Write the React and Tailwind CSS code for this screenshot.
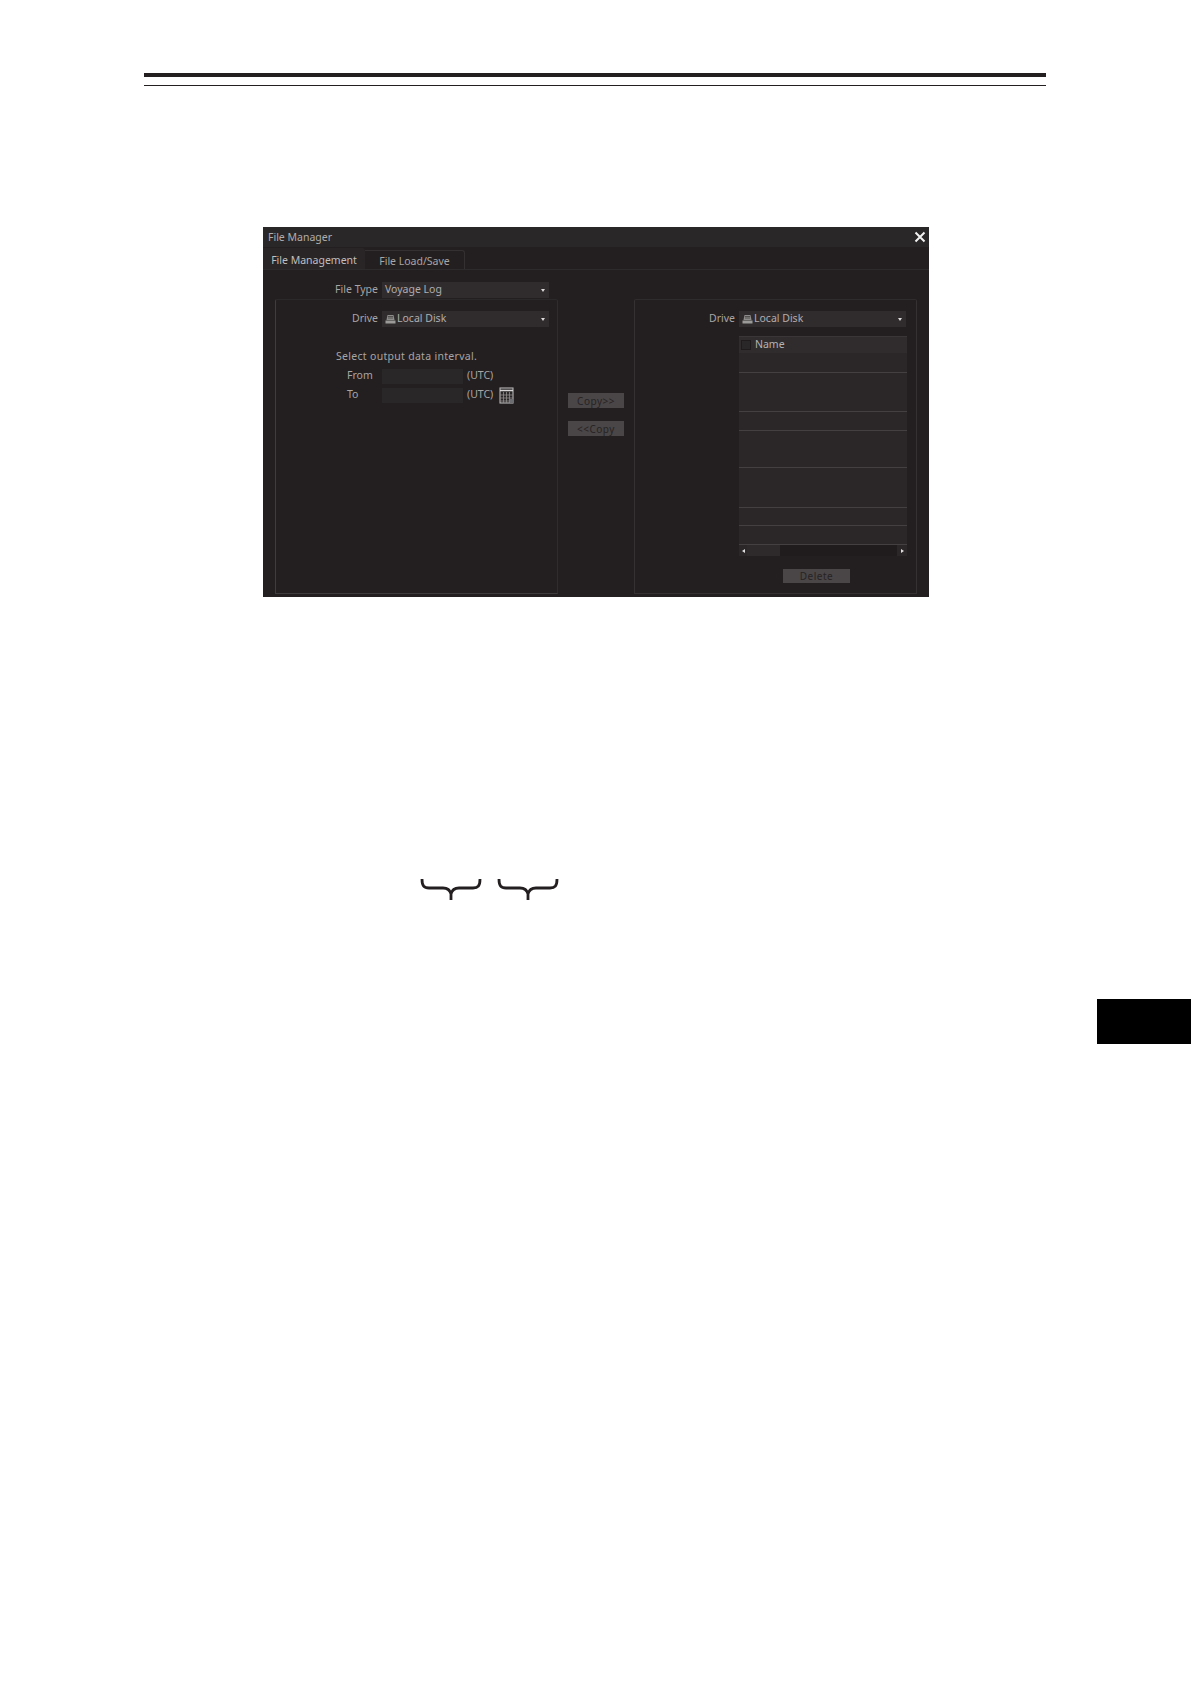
const FONT = { fontFamily: '"Noto Sans", "DejaVu Sans", sans-serif' };

const LIST_ROWS = ['h-[20px]', 'h-[39px]', 'h-[19px]', 'h-[37px]', 'h-[40px]', 'h-[18px]', 'h-[19px]'];

function DiskIcon() {
  return (
    <svg width="11" height="10" viewBox="0 0 11 10" className="shrink-0">
      <path d="M2.5 1h6l1 5h-8z" fill="#8f8c8c" />
      <path d="M3 2.5h5M3 4h5" stroke="#3a3637" strokeWidth="0.7" />
      <rect x="0.5" y="6.5" width="10" height="3" fill="#9c9999" />
    </svg>
  );
}

function CalendarIcon() {
  return (
    <svg width="16" height="17" viewBox="0 0 16 17">
      <rect x="1" y="1" width="13" height="15" fill="#2a2728" stroke="#b8b6b6" strokeWidth="1.1" />
      <path d="M1 3.5h13" stroke="#d8d6d6" strokeWidth="1.5" />
      <path d="M4.5 5v11M7.5 5v11M10.5 5v11M1 8h13M1 11h13M1 14h13" stroke="#8f8c8c" strokeWidth="0.8" />
      <path d="M11 12h4v4h-4z" fill="#6b6d70" />
    </svg>
  );
}

function Combo({ children }) {
  return (
    <div className="flex h-4 w-[167px] items-center justify-between bg-[#302c2d] pl-[3px] pr-[4px] text-[10.5px] text-[#b0adad]">
      <span className="flex items-center gap-[1px]">{children}</span>
      <span className="h-0 w-0 border-x-[2.5px] border-t-[3px] border-x-transparent border-t-[#d9d7d7]" />
    </div>
  );
}

function Brace() {
  return (
    <svg width="62" height="21" viewBox="0 0 62 21" fill="none">
      <path
        d="M2 0c0 7 2 9 7 9h14c4 0 7 2 8 6 1-4 4-6 8-6h14c5 0 7-2 7-9M31 14v7"
        stroke="#231f20"
        strokeWidth="2.8"
      />
    </svg>
  );
}

function CopyButton({ children }) {
  return (
    <button className="flex h-[15px] w-[56px] items-center justify-center bg-[#4a4647] text-[10px] leading-none tracking-[0.5px] text-[#272324]">
      {children}
    </button>
  );
}

export default function App() {
  return (
    <div className="relative h-[1684px] w-[1191px] overflow-hidden bg-white" style={FONT}>
      {/* page header rule */}
      <div className="pl-[144px] pr-[145px] pt-[73px]">
        <div className="h-1 bg-[#231f20]" />
        <div className="mt-2 h-px bg-[#231f20]" />
      </div>

      {/* File Manager window */}
      <div className="ml-[263px] mt-[141px] h-[370px] w-[666px] bg-[#231f20] text-[#b0adad]">
        <div className="flex h-[20px] items-center justify-between bg-[#2a2728] pl-[5px] pr-[3px] text-[10.5px]">
          <span className="pt-px">File Manager</span>
          <svg width="12" height="12" viewBox="0 0 12 12" stroke="#f2f1f1" strokeWidth="2">
            <path d="M1.5 1.5l9 9M10.5 1.5l-9 9" />
          </svg>
        </div>

        <div className="flex h-[23px] items-end border-b border-[#2e2b2c] text-[10.5px]">
          <div className="flex h-[21px] w-[102px] items-center justify-center rounded-tr-[3px] bg-[#292526] pt-[5px] text-[#c0bebe]">File Management</div>
          <div className="flex h-[19px] w-[100px] items-center justify-center rounded-tr-[3px] border-r border-t border-[#343031] pt-[3px] text-[#a8a5a5]">File Load/Save</div>
        </div>

        <div className="ml-[12px] mt-[12px] flex items-center">
          <div className="flex w-[107px] justify-end pr-[4px] text-[10.5px] text-[#a8a5a5]">File Type</div>
          <Combo>Voyage Log</Combo>
        </div>

        <div className="ml-[12px] mt-px flex h-[295px] items-stretch">
          {/* left group */}
          <div className="h-full w-[283px] rounded-t-[2px] border border-[#3f3c3d] border-r-[#2f2c2d] border-t-[#2c292a] pt-[11px]">
            <div className="flex items-center">
              <div className="flex w-[106px] justify-end pr-[4px] text-[10.5px] text-[#a8a5a5]">Drive</div>
              <Combo>
                <DiskIcon />
                Local Disk
              </Combo>
            </div>
            <div className="ml-[60px] mt-[21px] text-[10.5px] leading-[17px] tracking-[0.3px] text-[#a8a5a5]">Select output data interval.</div>
            <div className="mt-[3px] flex h-[16px] items-center text-[10.5px] text-[#a8a5a5]">
              <span className="ml-[71px] w-[35px]">From</span>
              <div className="h-[15px] w-[81px] bg-[#2a2728]" />
              <span className="ml-[4px]">(UTC)</span>
            </div>
            <div className="mt-[3px] flex h-[16px] items-center text-[10.5px] text-[#a8a5a5]">
              <span className="ml-[71px] w-[35px]">To</span>
              <div className="h-[15px] w-[81px] bg-[#2a2728]" />
              <span className="ml-[4px]">(UTC)</span>
              <span className="ml-[6px]">
                <CalendarIcon />
              </span>
            </div>
          </div>

          {/* copy buttons */}
          <div className="flex w-[76px] flex-col items-center gap-[13px] pt-[94px]">
            <CopyButton>Copy&gt;&gt;</CopyButton>
            <CopyButton>&lt;&lt;Copy</CopyButton>
          </div>

          {/* right group */}
          <div className="h-full w-[283px] rounded-t-[2px] border border-[#353132] border-t-[#2f2c2d] pt-[11px]">
            <div className="flex items-center">
              <div className="flex w-[104px] justify-end pr-[4px] text-[10.5px] text-[#a8a5a5]">Drive</div>
              <Combo>
                <DiskIcon />
                Local Disk
              </Combo>
            </div>

            <div className="ml-[104px] mt-[9px] w-[168px]">
              <div className="flex h-[17px] items-center border-t border-[#3a3637] bg-[#302c2d] pl-[2px] text-[10.5px] text-[#b5b2b2]">
                <span className="h-[10px] w-[10px] border border-[#1f1b1c] bg-[#2a2728]" />
                <span className="ml-[4px]">Name</span>
              </div>
              {LIST_ROWS.map((h, i) => (
                <div key={i} className={`${h} border-b border-[#444041] bg-[#2b2728]`} />
              ))}
              <div className="flex h-[11px] items-center bg-[#201c1d]">
                <span className="flex h-[11px] w-[8px] items-center justify-center bg-[#2b2728]">
                  <span className="h-0 w-0 border-y-[2.5px] border-r-[3px] border-y-transparent border-r-[#e0dede]" />
                </span>
                <span className="h-[11px] w-[33px] bg-[#2e2a2b]" />
                <span className="flex-1" />
                <span className="flex h-[11px] w-[10px] items-center justify-center bg-[#2b2728]">
                  <span className="h-0 w-0 border-y-[2.5px] border-l-[3px] border-y-transparent border-l-[#e0dede]" />
                </span>
              </div>
            </div>

            <div className="ml-[148px] mt-[13px] flex h-[14px] w-[67px] items-center justify-center bg-[#4a4647] text-[10px] tracking-[0.5px] text-[#272324]">
              Delete
            </div>
          </div>
        </div>
      </div>

      {/* braces under the figure */}
      <div className="ml-[420px] mt-[282px] flex gap-[15px]">
        <Brace />
        <Brace />
      </div>

      {/* chapter tab */}
      <div className="absolute left-[1097px] top-[999px] h-[45px] w-[94px] bg-black" />
    </div>
  );
}
